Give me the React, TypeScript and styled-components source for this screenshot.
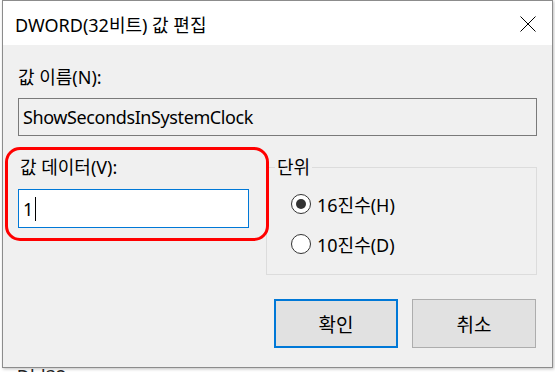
import React from 'react'
import styled, { createGlobalStyle } from 'styled-components'

const GlobalStyle = createGlobalStyle`
  html, body {
    margin: 0;
    padding: 0;
    background: #ffffff;
    overflow: hidden;
  }
  * {
    box-sizing: border-box;
  }
`

const uiFont = `"Noto Sans", "Noto Sans CJK KR", sans-serif`

const Desktop = styled.div`
  width: 555px;
  height: 372px;
  overflow: hidden;
  background: #ffffff;
  font-family: ${uiFont};
  color: #000;
`

const Window = styled.div`
  margin-left: 2px;
  width: 551px;
  height: 368px;
  border: 1px solid #8c8c8c;
  background: #f0f0f0;
  display: flex;
  flex-direction: column;
  box-shadow: 1px 1px 3px rgba(0, 0, 0, 0.25);
`

const TitleBar = styled.div`
  height: 44px;
  background: #ffffff;
  display: flex;
  align-items: center;
  justify-content: space-between;
  padding-left: 12px;
  flex-shrink: 0;
`

const Title = styled.div`
  font-size: 18px;
  line-height: 24px;
  margin-top: 4px;
`

const CloseButton = styled.div`
  width: 48px;
  height: 44px;
  display: flex;
  align-items: center;
  justify-content: center;
  margin-top: 2px;
`

const Body = styled.div`
  padding: 0 15px;
  display: flex;
  flex-direction: column;
`

const Label = styled.div<{ indent?: number }>`
  font-size: 18px;
  line-height: 24px;
  padding-left: ${({ indent }) => indent || 0}px;
`

const NameLabel = styled(Label)`
  margin-top: 20px;
`

const NameField = styled.div`
  margin-top: 9px;
  height: 38px;
  border: 1px solid #7a7a7a;
  background: #f0f0f0;
  display: flex;
  align-items: center;
  padding-left: 4px;
  font-size: 18px;
  letter-spacing: -0.4px;
`

const LowerRow = styled.div`
  margin-top: 19px;
  display: flex;
  gap: 17px;
  align-items: flex-start;
`

const DataColumn = styled.div`
  position: relative;
  width: 231px;
  display: flex;
  flex-direction: column;
`

const Highlight = styled.div`
  position: absolute;
  left: -13px;
  top: -8px;
  width: 264px;
  height: 94px;
  border: 3px solid #ff0000;
  border-radius: 15px;
  pointer-events: none;
`

const DataField = styled.div`
  margin-top: 10px;
  height: 39px;
  border: 1px solid #0078d7;
  background: #ffffff;
  display: flex;
  align-items: center;
  padding-left: 4px;
  font-size: 18px;
`

const Caret = styled.span`
  display: inline-block;
  width: 1px;
  height: 24px;
  background: #000;
  margin-left: 2px;
`

const Group = styled.fieldset`
  margin: 0;
  width: 271px;
  height: 120px;
  border: 1px solid #dcdcdc;
  padding: 15px 0 0 24px;
  display: flex;
  flex-direction: column;
  gap: 20px;
`

const Legend = styled.legend`
  font-size: 18px;
  line-height: 24px;
  padding: 0 2px;
  margin-left: -16px;
`

const RadioRow = styled.div`
  display: flex;
  align-items: center;
  gap: 6px;
  height: 20px;
  font-size: 18px;
`

const RadioCircle = styled.span<{ checked?: boolean }>`
  width: 20px;
  height: 20px;
  border-radius: 50%;
  border: 1px solid #333;
  background: #fff;
  display: flex;
  align-items: center;
  justify-content: center;
  &::after {
    content: '';
    width: 10px;
    height: 10px;
    border-radius: 50%;
    background: ${({ checked }) => (checked ? '#333' : 'transparent')};
  }
`

const ButtonRow = styled.div`
  margin-top: 24px;
  display: flex;
  justify-content: flex-end;
  gap: 14px;
  padding-right: 1px;
`

const Button = styled.div<{ primary?: boolean }>`
  width: 124px;
  height: 49px;
  background: #e1e1e1;
  border: ${({ primary }) => (primary ? '2px solid #0078d7' : '1px solid #adadad')};
  display: flex;
  align-items: center;
  justify-content: center;
  font-size: 19px;
`

const BehindText = styled.div`
  font-size: 18px;
  line-height: 18px;
  color: #222;
  margin-top: -1px;
`

const Radio: React.FC<{ checked?: boolean; label: string }> = ({ checked, label }) => (
  <RadioRow>
    <RadioCircle checked={checked} />
    {label}
  </RadioRow>
)

const App: React.FC = () => {
  return (
    <>
      <GlobalStyle />
      <Desktop>
        <Window>
          <TitleBar>
            <Title>DWORD(32비트) 값 편집</Title>
            <CloseButton>
              <svg width="16" height="16" viewBox="0 0 16 16">
                <path d="M0.5 0.5 L15.5 15.5 M15.5 0.5 L0.5 15.5" stroke="#000" strokeWidth="1" fill="none" />
              </svg>
            </CloseButton>
          </TitleBar>
          <Body>
            <NameLabel>값 이름(N):</NameLabel>
            <NameField>ShowSecondsInSystemClock</NameField>
            <LowerRow>
              <DataColumn>
                <Label indent={2}>값 데이터(V):</Label>
                <DataField>
                  1<Caret />
                </DataField>
                <Highlight />
              </DataColumn>
              <Group>
                <Legend>단위</Legend>
                <Radio checked label="16진수(H)" />
                <Radio label="10진수(D)" />
              </Group>
            </LowerRow>
            <ButtonRow>
              <Button primary>확인</Button>
              <Button>취소</Button>
            </ButtonRow>
          </Body>
        </Window>
        <BehindText>mDld32</BehindText>
      </Desktop>
    </>
  )
}

export default App
